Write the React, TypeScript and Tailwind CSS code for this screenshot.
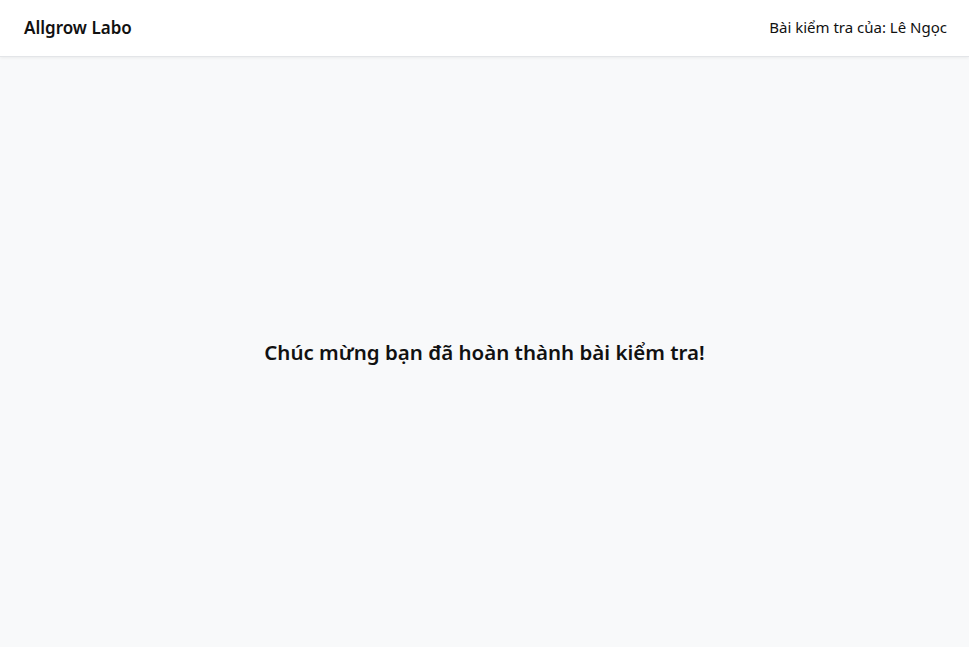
export default function App() {
  return (
    <div className="flex h-[647px] flex-col bg-[#f8f9fa] font-['Noto_Sans',sans-serif] text-[#111]">
      <header className="flex h-[57px] shrink-0 items-center justify-between border-b border-[#e3e5e8] bg-white px-[24px] pb-[1px] shadow-[0_1px_3px_rgba(0,0,0,0.06)]">
        <div className="text-[17px] font-semibold">Allgrow Labo</div>
        <div className="mr-[-2px] text-[15px]">Bài kiểm tra của: Lê Ngọc</div>
      </header>
      <main className="flex flex-1 items-center justify-center">
        <h1 className="text-[20.5px] font-semibold">Chúc mừng bạn đã hoàn thành bài kiểm tra!</h1>
      </main>
    </div>
  );
}
